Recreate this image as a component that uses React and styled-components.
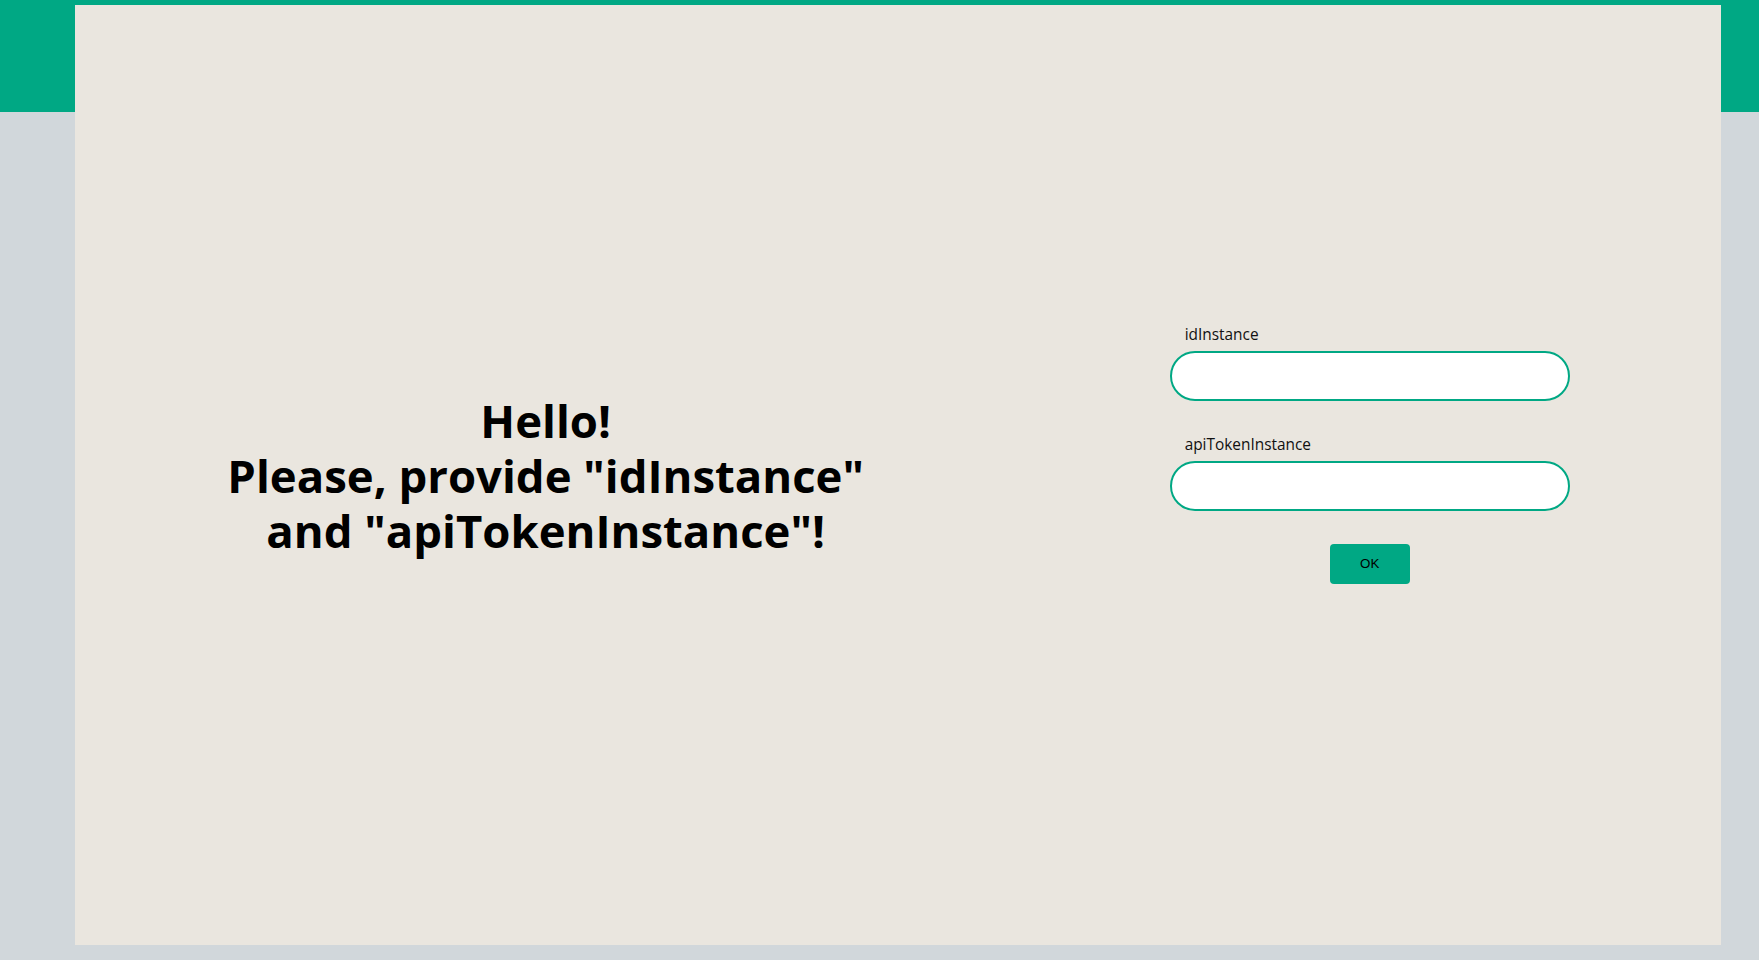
import React from "react";
import styled, { createGlobalStyle } from "styled-components";

const GlobalStyle = createGlobalStyle`
  *, *::before, *::after { box-sizing: border-box; }
  html, body { margin: 0; padding: 0; }
  body {
    font-family: "Open Sans", "Noto Sans", sans-serif;
    color: #000;
    background: #d1d7db;
  }
`;

const Page = styled.div`
  min-height: 100vh;
  padding-top: 5px;
  padding-bottom: 15px;
  background: linear-gradient(to bottom, #00a884 0, #00a884 112px, #d1d7db 112px);
`;

const Panel = styled.main`
  margin-left: 75px;
  width: 1646px;
  height: 940px;
  background: #eae6df;
  display: flex;
  justify-content: space-around;
  align-items: center;
`;

const Heading = styled.h1`
  margin: 0;
  font-family: "Open Sans", "Noto Sans", sans-serif;
  font-weight: 700;
  font-size: 45.5px;
  line-height: 55px;
  text-align: center;
  color: #000;
`;

const Form = styled.form`
  width: 400px;
  display: flex;
  flex-direction: column;
  padding-top: 1px;
  padding-bottom: 42px;
  transform: translateX(1px);
`;

const Field = styled.div`
  display: flex;
  flex-direction: column;
  gap: 7px;
  & + & {
    margin-top: 35px;
  }
`;

const Label = styled.label`
  padding-left: 15px;
  font-family: "Open Sans", "Noto Sans", sans-serif;
  font-size: 15.4px;
  line-height: 18px;
  color: #111;
`;

const Input = styled.input`
  width: 100%;
  height: 50px;
  padding: 0 20px;
  border: 2px solid #00a884;
  border-radius: 25px;
  background: #fff;
  font-size: 16px;
  outline: none;
`;

const Button = styled.button`
  align-self: center;
  margin-top: 33px;
  width: 80px;
  height: 40px;
  border: none;
  border-radius: 4px;
  background: #00a884;
  color: #000;
  font-family: "Liberation Sans", Arial, sans-serif;
  font-size: 13.33px;
  cursor: pointer;
`;

export default function App() {
  return (
    <>
      <GlobalStyle />
      <Page>
        <Panel>
          <Heading>
            Hello!
            <br />
            Please, provide "idInstance"
            <br />
            and "apiTokenInstance"!
          </Heading>
          <Form onSubmit={(e) => e.preventDefault()}>
            <Field>
              <Label htmlFor="idInstance">idInstance</Label>
              <Input id="idInstance" type="text" />
            </Field>
            <Field>
              <Label htmlFor="apiTokenInstance">apiTokenInstance</Label>
              <Input id="apiTokenInstance" type="text" />
            </Field>
            <Button type="submit">OK</Button>
          </Form>
        </Panel>
      </Page>
    </>
  );
}
